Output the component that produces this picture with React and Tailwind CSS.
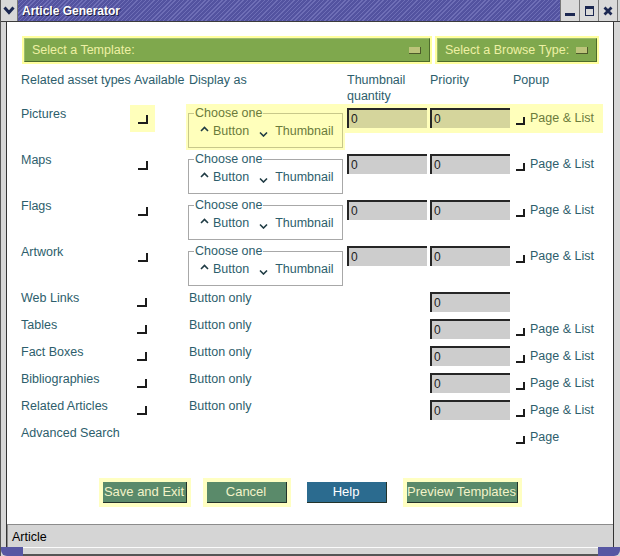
import React from 'react'

const TEAL = 'text-[#2d5e6c]'
const OLIVE = 'text-[#6b7b3b]'
const HILITE = 'bg-[#ffffbb]'

const thumbRows = [
  { name: 'Pictures', active: true },
  { name: 'Maps' },
  { name: 'Flags' },
  { name: 'Artwork' },
]

const simpleRows = [
  { name: 'Web Links', check: true, priority: true },
  { name: 'Tables', check: true, priority: true, popup: 'Page & List' },
  { name: 'Fact Boxes', check: true, priority: true, popup: 'Page & List' },
  { name: 'Bibliographies', check: true, priority: true, popup: 'Page & List' },
  { name: 'Related Articles', check: true, priority: true, popup: 'Page & List' },
  { name: 'Advanced Search', popup: 'Page' },
]

function Tick({ className = 'h-[9px] w-[10px]' }) {
  return <span className={`block border-b-2 border-r-2 border-[#1c1c1c] ${className}`} />
}

function Caret({ down }) {
  return (
    <svg width="9" height="12" viewBox="0 0 9 12" className="shrink-0">
      <path
        d={down ? 'M1 7.5 L4.5 11 L8 7.5' : 'M1 6 L4.5 2.5 L8 6'}
        fill="none"
        stroke="#1f3b44"
        strokeWidth="1.6"
      />
    </svg>
  )
}

function Field({ active, className = '' }) {
  return (
    <div
      className={`flex h-[20px] w-[80px] shrink-0 items-center border-l-2 border-t-2 border-[#262626] pl-[2px] text-[12px] text-[#222] ${
        active ? 'bg-[#d5d59c]' : 'bg-[#cdcdcd]'
      } ${className}`}
    >
      0
    </div>
  )
}

function Popup({ label, active }) {
  return (
    <div className="ml-[6px] mt-[7px] flex h-[14px] items-end">
      <Tick className="h-[8px] w-[9px]" />
      <span className={`ml-[5px] leading-[14px] ${active ? OLIVE : TEAL}`}>{label}</span>
    </div>
  )
}

function Combo({ label, className }) {
  return (
    <div className={`bg-[#ffff9e] p-[2px] ${className}`}>
      <div className="flex h-[24px] items-center justify-between border border-b-[#4d6b2b] border-l-[#9dbb6e] border-r-[#4d6b2b] border-t-[#9dbb6e] bg-[#7fa84d] pl-[7px] pr-[8px]">
        <span className="text-[#eef0a4]">{label}</span>
        <span className="block h-[7px] w-[12px] border-b border-r border-[#4d5a2a] bg-[#bcc47a]" />
      </div>
    </div>
  )
}

function Btn({ label, className, halo = true, blue }) {
  return (
    <div className={`p-[4px] ${halo ? 'bg-[#ffffc2]' : ''}`}>
      <div
        className={`flex h-[21px] items-center justify-center border-b border-r border-[#23332a] text-[13px] ${
          blue ? 'bg-[#2b6b8f] text-white' : 'bg-[#5a8a6a] text-[#f3f3c8]'
        } ${className}`}
      >
        {label}
      </div>
    </div>
  )
}

function ThumbRow({ name, active }) {
  const text = active ? OLIVE : TEAL
  return (
    <div className="flex h-[46px]">
      <div className={`w-[109px] pt-[3px] leading-[14px] ${TEAL}`}>{name}</div>
      <div className="w-[56px] pt-[1px]">
        <div className={`flex h-[27px] w-[25px] justify-center pt-[10px] ${active ? HILITE : ''}`}>
          <Tick />
        </div>
      </div>
      <div className={`h-[46px] w-[159px] pl-[2px] pt-[2px] ${active ? HILITE : ''}`}>
        <fieldset
          className={`h-[42px] w-[155px] border px-[5px] ${text} ${
            active ? 'border-[#c8c88a]' : 'border-[#a8a8a8]'
          }`}
        >
          <legend className="px-[1px] leading-[14px]">Choose one</legend>
          <div className="mt-[4px] flex h-[14px] items-center leading-[14px]">
            <span className="ml-[6px]">
              <Caret />
            </span>
            <span className="ml-[4px]">Button</span>
            <span className="ml-[10px]">
              <Caret down />
            </span>
            <span className="ml-[7px]">Thumbnail</span>
          </div>
        </fieldset>
      </div>
      <div className={`flex h-[29px] w-[258px] items-start ${active ? HILITE : ''}`}>
        <Field active={active} className="ml-[2px] mt-[4px]" />
        <Field active={active} className="ml-[3px] mt-[4px]" />
        <Popup label="Page & List" active={active} />
      </div>
    </div>
  )
}

function SimpleRow({ name, check, priority, popup }) {
  return (
    <div className="flex h-[27px]">
      <div className={`w-[109px] pt-[3px] leading-[14px] ${TEAL}`}>{name}</div>
      <div className="w-[56px] pl-[7px] pt-[10px]">{check && <Tick />}</div>
      <div className={`w-[159px] pl-[3px] pt-[3px] leading-[14px] ${TEAL}`}>
        {check && 'Button only'}
      </div>
      <div className="flex w-[258px] items-start">
        <div className="w-[85px] shrink-0" />
        {priority ? <Field className="mt-[4px]" /> : <div className="w-[80px] shrink-0" />}
        {popup && <Popup label={popup} />}
      </div>
    </div>
  )
}

export default function App() {
  return (
    <div className="flex h-[556px] w-[620px] flex-col overflow-hidden border-l border-[#555] bg-[#d6d6d6] font-['Liberation_Sans',Arial,sans-serif] text-[12.5px]">
      {/* title bar */}
      <div className="flex h-[22px] shrink-0 border-b border-[#3c3c3c]">
        <div className="flex w-[17px] items-center justify-center border-r border-[#777] bg-[#d8d8d8]">
          <svg width="12" height="9" viewBox="0 0 12 9">
            <path d="M1.5 1.5 L6 6.5 L10.5 1.5" fill="none" stroke="#1c2852" strokeWidth="3" />
          </svg>
        </div>
        <div className="flex flex-1 items-center bg-[repeating-linear-gradient(135deg,#6e6eb6_0_1px,#5353a0_1px_3px)] pl-[4px]">
          <span className="text-[12px] font-bold text-white [text-shadow:1px_1px_0_#1e1e40]">
            Article Generator
          </span>
        </div>
        <div className="flex w-[19px] items-end justify-center border-l border-[#777] bg-[#dadada] pb-[5px]">
          <span className="block h-[3px] w-[10px] bg-[#1c2852]" />
        </div>
        <div className="flex w-[19px] items-center justify-center border-l border-[#777] bg-[#dadada]">
          <span className="block h-[10px] w-[9px] border border-t-[3px] border-[#1c2852]" />
        </div>
        <div className="flex w-[19px] items-center justify-center border-l border-[#777] bg-[#dadada]">
          <svg width="10" height="10" viewBox="0 0 10 10">
            <path d="M1.5 1.5 L8.5 8.5 M8.5 1.5 L1.5 8.5" stroke="#1c2852" strokeWidth="2.8" />
          </svg>
        </div>
        <div className="w-[3px] border-l border-[#777] bg-[#d6d6d6]" />
      </div>

      {/* body */}
      <div className="flex min-h-0 flex-1">
        <div className="w-[6px] border-r border-[#333]" />
        <div className="flex w-[606px] flex-col">
          <div className="flex flex-1 flex-col bg-white">
            <div className="ml-[15px] mt-[14px] flex gap-[3px]">
              <Combo label="Select a Template:" className="w-[410px]" />
              <Combo label="Select a Browse Type:" className="w-[164px]" />
            </div>

            <div className="ml-[14px] mt-[8px] flex h-[32px] leading-[16px]">
              <div className={`w-[113px] ${TEAL}`}>Related asset types</div>
              <div className={`w-[55px] ${TEAL}`}>Available</div>
              <div className={`w-[158px] ${TEAL}`}>Display as</div>
              <div className={`w-[83px] ${TEAL}`}>
                Thumbnail
                <br />
                quantity
              </div>
              <div className={`w-[83px] ${TEAL}`}>Priority</div>
              <div className={TEAL}>Popup</div>
            </div>

            <div className="ml-[14px] flex flex-col">
              {thumbRows.map((r) => (
                <ThumbRow key={r.name} {...r} />
              ))}
              {simpleRows.map((r) => (
                <SimpleRow key={r.name} {...r} />
              ))}
            </div>

            <div className="mt-[28px] flex justify-center gap-[12px]">
              <Btn label="Save and Exit" className="w-[84px]" />
              <Btn label="Cancel" className="w-[80px]" />
              <Btn label="Help" className="w-[80px]" halo={false} blue />
              <Btn label="Preview Templates" className="w-[111px]" />
            </div>
          </div>

          {/* status bar */}
          <div className="flex h-[23px] shrink-0 items-center border-l border-t border-[#8c8c8c] bg-[#d5d5d5] pl-[4px] pt-[3px] text-[12.5px] text-black">
            Article
          </div>
        </div>
        <div className="w-[7px] border-l border-[#333]" />
      </div>

      {/* bottom frame */}
      <div className="flex h-[9px] shrink-0">
        <div className="w-[22px] rounded-bl-[6px] bg-[#5757a3]" />
        <div className="flex-1 border-b-2 border-t border-b-[#555] border-t-[#fafafa] bg-[#d6d6d6]" />
        <div className="w-[22px] rounded-br-[6px] bg-[#5757a3]" />
      </div>
    </div>
  )
}
